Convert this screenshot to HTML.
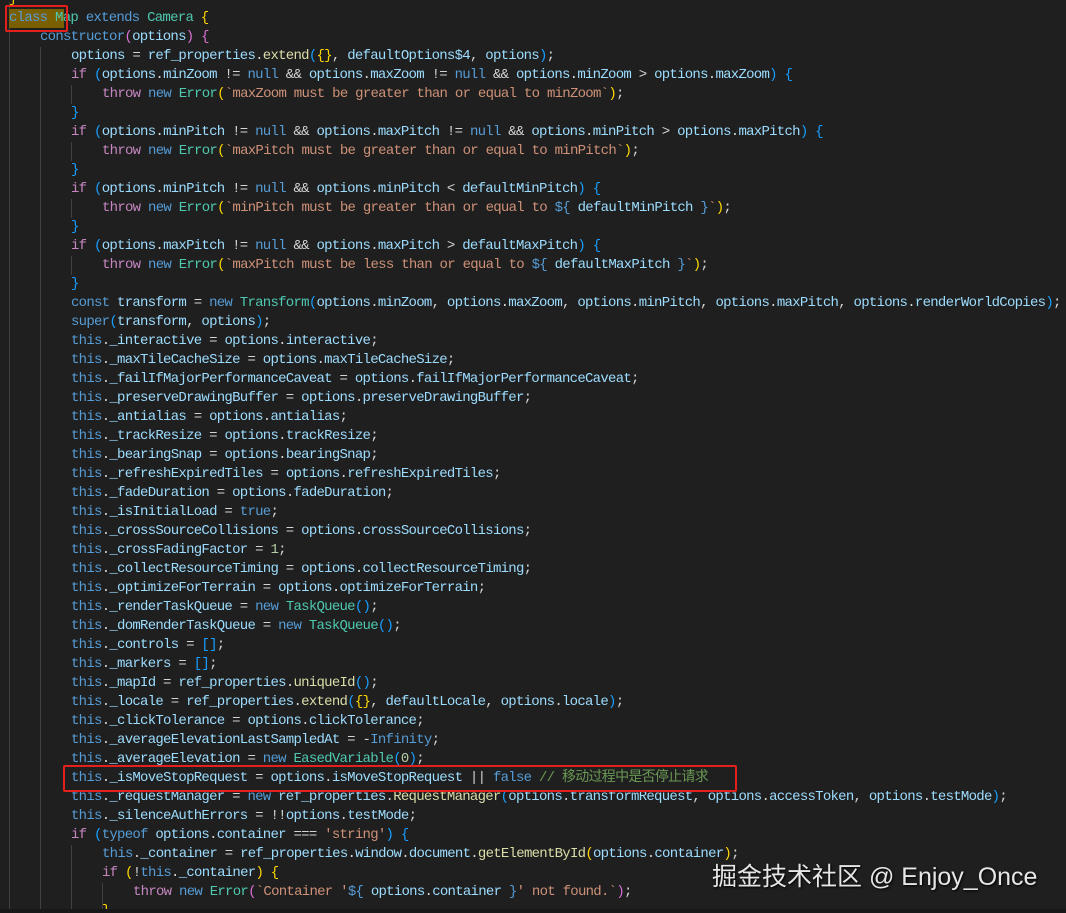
<!DOCTYPE html>
<html><head><meta charset="utf-8"><style>
html,body{margin:0;padding:0;background:#1f1f1f;width:1066px;height:913px;overflow:hidden;position:relative}
#w{position:absolute;left:0;top:2px;width:1066px;height:913px}
.l{position:absolute;left:0;height:19px;line-height:19px;white-space:pre;font-family:"Liberation Mono",monospace;font-size:14px;letter-spacing:-0.73px;color:#d4d4d4}
.k{color:#569cd6}.c{color:#c586c0}.v{color:#9cdcfe}.f{color:#dcdcaa}.t{color:#4ec9b0}.s{color:#ce9178}.n{color:#b5cea8}.m{color:#6a9955;font-family:"Liberation Mono","Noto Sans CJK SC",monospace}.y{color:#ffd700}.p{color:#da70d6}.b{color:#179fff}
.g{position:absolute;width:1px;background:#404040}
.box{position:absolute;border:2px solid #e3201b;border-radius:2px}
.wm{position:absolute;left:712px;top:857px;font-family:"Liberation Sans","Noto Sans CJK SC",sans-serif;font-size:25px;color:#e6e6e6;text-shadow:1px 1px 2px #000}
</style></head><body>
<div id="w">
<div class="g" style="left:9px;top:0;height:913px"></div>
<div class="g" style="left:40px;top:45px;height:868px"></div>
<div class="g" style="left:71px;top:83px;height:19px"></div>
<div class="g" style="left:71px;top:140px;height:19px"></div>
<div class="g" style="left:71px;top:197px;height:19px"></div>
<div class="g" style="left:71px;top:254px;height:19px"></div>
<div class="g" style="left:71px;top:843px;height:70px"></div>
<div class="g" style="left:102px;top:881px;height:32px"></div>
<div style="position:absolute;left:9px;top:7px;width:55px;height:19px;background:#7a5f00"></div>
<div class="l" style="top:-12px;left:9px"><span class="y">}</span></div>
<div class="l" style="top:7px;left:9px"><span class="k">class</span> <span class="t">Map</span> <span class="k">extends</span> <span class="t">Camera</span> <span class="y">{</span></div>
<div class="l" style="top:26px;left:40px"><span class="k">constructor</span><span class="p">(</span><span class="v">options</span><span class="p">)</span> <span class="p">{</span></div>
<div class="l" style="top:45px;left:71px"><span class="v">options</span> = <span class="v">ref_properties</span>.<span class="f">extend</span><span class="b">(</span><span class="y">{}</span>, <span class="v">defaultOptions$4</span>, <span class="v">options</span><span class="b">)</span>;</div>
<div class="l" style="top:64px;left:71px"><span class="c">if</span> <span class="b">(</span><span class="v">options</span>.<span class="v">minZoom</span> != <span class="k">null</span> &amp;&amp; <span class="v">options</span>.<span class="v">maxZoom</span> != <span class="k">null</span> &amp;&amp; <span class="v">options</span>.<span class="v">minZoom</span> &gt; <span class="v">options</span>.<span class="v">maxZoom</span><span class="b">)</span> <span class="b">{</span></div>
<div class="l" style="top:83px;left:102px"><span class="c">throw</span> <span class="k">new</span> <span class="t">Error</span><span class="y">(</span><span class="s">`maxZoom must be greater than or equal to minZoom`</span><span class="y">)</span>;</div>
<div class="l" style="top:102px;left:71px"><span class="b">}</span></div>
<div class="l" style="top:121px;left:71px"><span class="c">if</span> <span class="b">(</span><span class="v">options</span>.<span class="v">minPitch</span> != <span class="k">null</span> &amp;&amp; <span class="v">options</span>.<span class="v">maxPitch</span> != <span class="k">null</span> &amp;&amp; <span class="v">options</span>.<span class="v">minPitch</span> &gt; <span class="v">options</span>.<span class="v">maxPitch</span><span class="b">)</span> <span class="b">{</span></div>
<div class="l" style="top:140px;left:102px"><span class="c">throw</span> <span class="k">new</span> <span class="t">Error</span><span class="y">(</span><span class="s">`maxPitch must be greater than or equal to minPitch`</span><span class="y">)</span>;</div>
<div class="l" style="top:159px;left:71px"><span class="b">}</span></div>
<div class="l" style="top:178px;left:71px"><span class="c">if</span> <span class="b">(</span><span class="v">options</span>.<span class="v">minPitch</span> != <span class="k">null</span> &amp;&amp; <span class="v">options</span>.<span class="v">minPitch</span> &lt; <span class="v">defaultMinPitch</span><span class="b">)</span> <span class="b">{</span></div>
<div class="l" style="top:197px;left:102px"><span class="c">throw</span> <span class="k">new</span> <span class="t">Error</span><span class="y">(</span><span class="s">`minPitch must be greater than or equal to </span><span class="k">${</span> <span class="v">defaultMinPitch</span> <span class="k">}</span><span class="s">`</span><span class="y">)</span>;</div>
<div class="l" style="top:216px;left:71px"><span class="b">}</span></div>
<div class="l" style="top:235px;left:71px"><span class="c">if</span> <span class="b">(</span><span class="v">options</span>.<span class="v">maxPitch</span> != <span class="k">null</span> &amp;&amp; <span class="v">options</span>.<span class="v">maxPitch</span> &gt; <span class="v">defaultMaxPitch</span><span class="b">)</span> <span class="b">{</span></div>
<div class="l" style="top:254px;left:102px"><span class="c">throw</span> <span class="k">new</span> <span class="t">Error</span><span class="y">(</span><span class="s">`maxPitch must be less than or equal to </span><span class="k">${</span> <span class="v">defaultMaxPitch</span> <span class="k">}</span><span class="s">`</span><span class="y">)</span>;</div>
<div class="l" style="top:273px;left:71px"><span class="b">}</span></div>
<div class="l" style="top:292px;left:71px"><span class="k">const</span> <span class="v">transform</span> = <span class="k">new</span> <span class="t">Transform</span><span class="b">(</span><span class="v">options</span>.<span class="v">minZoom</span>, <span class="v">options</span>.<span class="v">maxZoom</span>, <span class="v">options</span>.<span class="v">minPitch</span>, <span class="v">options</span>.<span class="v">maxPitch</span>, <span class="v">options</span>.<span class="v">renderWorldCopies</span><span class="b">)</span>;</div>
<div class="l" style="top:311px;left:71px"><span class="k">super</span><span class="b">(</span><span class="v">transform</span>, <span class="v">options</span><span class="b">)</span>;</div>
<div class="l" style="top:330px;left:71px"><span class="k">this</span>.<span class="v">_interactive</span> = <span class="v">options</span>.<span class="v">interactive</span>;</div>
<div class="l" style="top:349px;left:71px"><span class="k">this</span>.<span class="v">_maxTileCacheSize</span> = <span class="v">options</span>.<span class="v">maxTileCacheSize</span>;</div>
<div class="l" style="top:368px;left:71px"><span class="k">this</span>.<span class="v">_failIfMajorPerformanceCaveat</span> = <span class="v">options</span>.<span class="v">failIfMajorPerformanceCaveat</span>;</div>
<div class="l" style="top:387px;left:71px"><span class="k">this</span>.<span class="v">_preserveDrawingBuffer</span> = <span class="v">options</span>.<span class="v">preserveDrawingBuffer</span>;</div>
<div class="l" style="top:406px;left:71px"><span class="k">this</span>.<span class="v">_antialias</span> = <span class="v">options</span>.<span class="v">antialias</span>;</div>
<div class="l" style="top:425px;left:71px"><span class="k">this</span>.<span class="v">_trackResize</span> = <span class="v">options</span>.<span class="v">trackResize</span>;</div>
<div class="l" style="top:444px;left:71px"><span class="k">this</span>.<span class="v">_bearingSnap</span> = <span class="v">options</span>.<span class="v">bearingSnap</span>;</div>
<div class="l" style="top:463px;left:71px"><span class="k">this</span>.<span class="v">_refreshExpiredTiles</span> = <span class="v">options</span>.<span class="v">refreshExpiredTiles</span>;</div>
<div class="l" style="top:482px;left:71px"><span class="k">this</span>.<span class="v">_fadeDuration</span> = <span class="v">options</span>.<span class="v">fadeDuration</span>;</div>
<div class="l" style="top:501px;left:71px"><span class="k">this</span>.<span class="v">_isInitialLoad</span> = <span class="k">true</span>;</div>
<div class="l" style="top:520px;left:71px"><span class="k">this</span>.<span class="v">_crossSourceCollisions</span> = <span class="v">options</span>.<span class="v">crossSourceCollisions</span>;</div>
<div class="l" style="top:539px;left:71px"><span class="k">this</span>.<span class="v">_crossFadingFactor</span> = <span class="n">1</span>;</div>
<div class="l" style="top:558px;left:71px"><span class="k">this</span>.<span class="v">_collectResourceTiming</span> = <span class="v">options</span>.<span class="v">collectResourceTiming</span>;</div>
<div class="l" style="top:577px;left:71px"><span class="k">this</span>.<span class="v">_optimizeForTerrain</span> = <span class="v">options</span>.<span class="v">optimizeForTerrain</span>;</div>
<div class="l" style="top:596px;left:71px"><span class="k">this</span>.<span class="v">_renderTaskQueue</span> = <span class="k">new</span> <span class="t">TaskQueue</span><span class="b">()</span>;</div>
<div class="l" style="top:615px;left:71px"><span class="k">this</span>.<span class="v">_domRenderTaskQueue</span> = <span class="k">new</span> <span class="t">TaskQueue</span><span class="b">()</span>;</div>
<div class="l" style="top:634px;left:71px"><span class="k">this</span>.<span class="v">_controls</span> = <span class="b">[]</span>;</div>
<div class="l" style="top:653px;left:71px"><span class="k">this</span>.<span class="v">_markers</span> = <span class="b">[]</span>;</div>
<div class="l" style="top:672px;left:71px"><span class="k">this</span>.<span class="v">_mapId</span> = <span class="v">ref_properties</span>.<span class="f">uniqueId</span><span class="b">()</span>;</div>
<div class="l" style="top:691px;left:71px"><span class="k">this</span>.<span class="v">_locale</span> = <span class="v">ref_properties</span>.<span class="f">extend</span><span class="b">(</span><span class="y">{}</span>, <span class="v">defaultLocale</span>, <span class="v">options</span>.<span class="v">locale</span><span class="b">)</span>;</div>
<div class="l" style="top:710px;left:71px"><span class="k">this</span>.<span class="v">_clickTolerance</span> = <span class="v">options</span>.<span class="v">clickTolerance</span>;</div>
<div class="l" style="top:729px;left:71px"><span class="k">this</span>.<span class="v">_averageElevationLastSampledAt</span> = -<span class="k">Infinity</span>;</div>
<div class="l" style="top:748px;left:71px"><span class="k">this</span>.<span class="v">_averageElevation</span> = <span class="k">new</span> <span class="t">EasedVariable</span><span class="b">(</span><span class="n">0</span><span class="b">)</span>;</div>
<div class="l" style="top:767px;left:71px"><span class="k">this</span>.<span class="v">_isMoveStopRequest</span> = <span class="v">options</span>.<span class="v">isMoveStopRequest</span> || <span class="k">false</span> <span class="m">// 移动过程中是否停止请求</span></div>
<div class="l" style="top:786px;left:71px"><span class="k">this</span>.<span class="v">_requestManager</span> = <span class="k">new</span> <span class="v">ref_properties</span>.<span class="f">RequestManager</span><span class="b">(</span><span class="v">options</span>.<span class="v">transformRequest</span>, <span class="v">options</span>.<span class="v">accessToken</span>, <span class="v">options</span>.<span class="v">testMode</span><span class="b">)</span>;</div>
<div class="l" style="top:805px;left:71px"><span class="k">this</span>.<span class="v">_silenceAuthErrors</span> = !!<span class="v">options</span>.<span class="v">testMode</span>;</div>
<div class="l" style="top:824px;left:71px"><span class="c">if</span> <span class="b">(</span><span class="k">typeof</span> <span class="v">options</span>.<span class="v">container</span> === <span class="s">'string'</span><span class="b">)</span> <span class="b">{</span></div>
<div class="l" style="top:843px;left:102px"><span class="k">this</span>.<span class="v">_container</span> = <span class="v">ref_properties</span>.<span class="v">window</span>.<span class="v">document</span>.<span class="f">getElementById</span><span class="y">(</span><span class="v">options</span>.<span class="v">container</span><span class="y">)</span>;</div>
<div class="l" style="top:862px;left:102px"><span class="c">if</span> <span class="y">(</span>!<span class="k">this</span>.<span class="v">_container</span><span class="y">)</span> <span class="y">{</span></div>
<div class="l" style="top:881px;left:133px"><span class="c">throw</span> <span class="k">new</span> <span class="t">Error</span><span class="p">(</span><span class="s">`Container '</span><span class="k">${</span> <span class="v">options</span>.<span class="v">container</span> <span class="k">}</span><span class="s">' not found.`</span><span class="p">)</span>;</div>
<div class="l" style="top:900px;left:102px"><span class="y">}</span></div>
<div class="box" style="left:5px;top:3px;width:59px;height:23px"></div>
<div class="box" style="left:63px;top:763px;width:670px;height:23px"></div>
</div>
<div style="position:absolute;left:0;top:909px;width:1066px;height:4px;background:#181818"></div>
<div class="wm">掘金技术社区 @ Enjoy_Once</div>
</body></html>
